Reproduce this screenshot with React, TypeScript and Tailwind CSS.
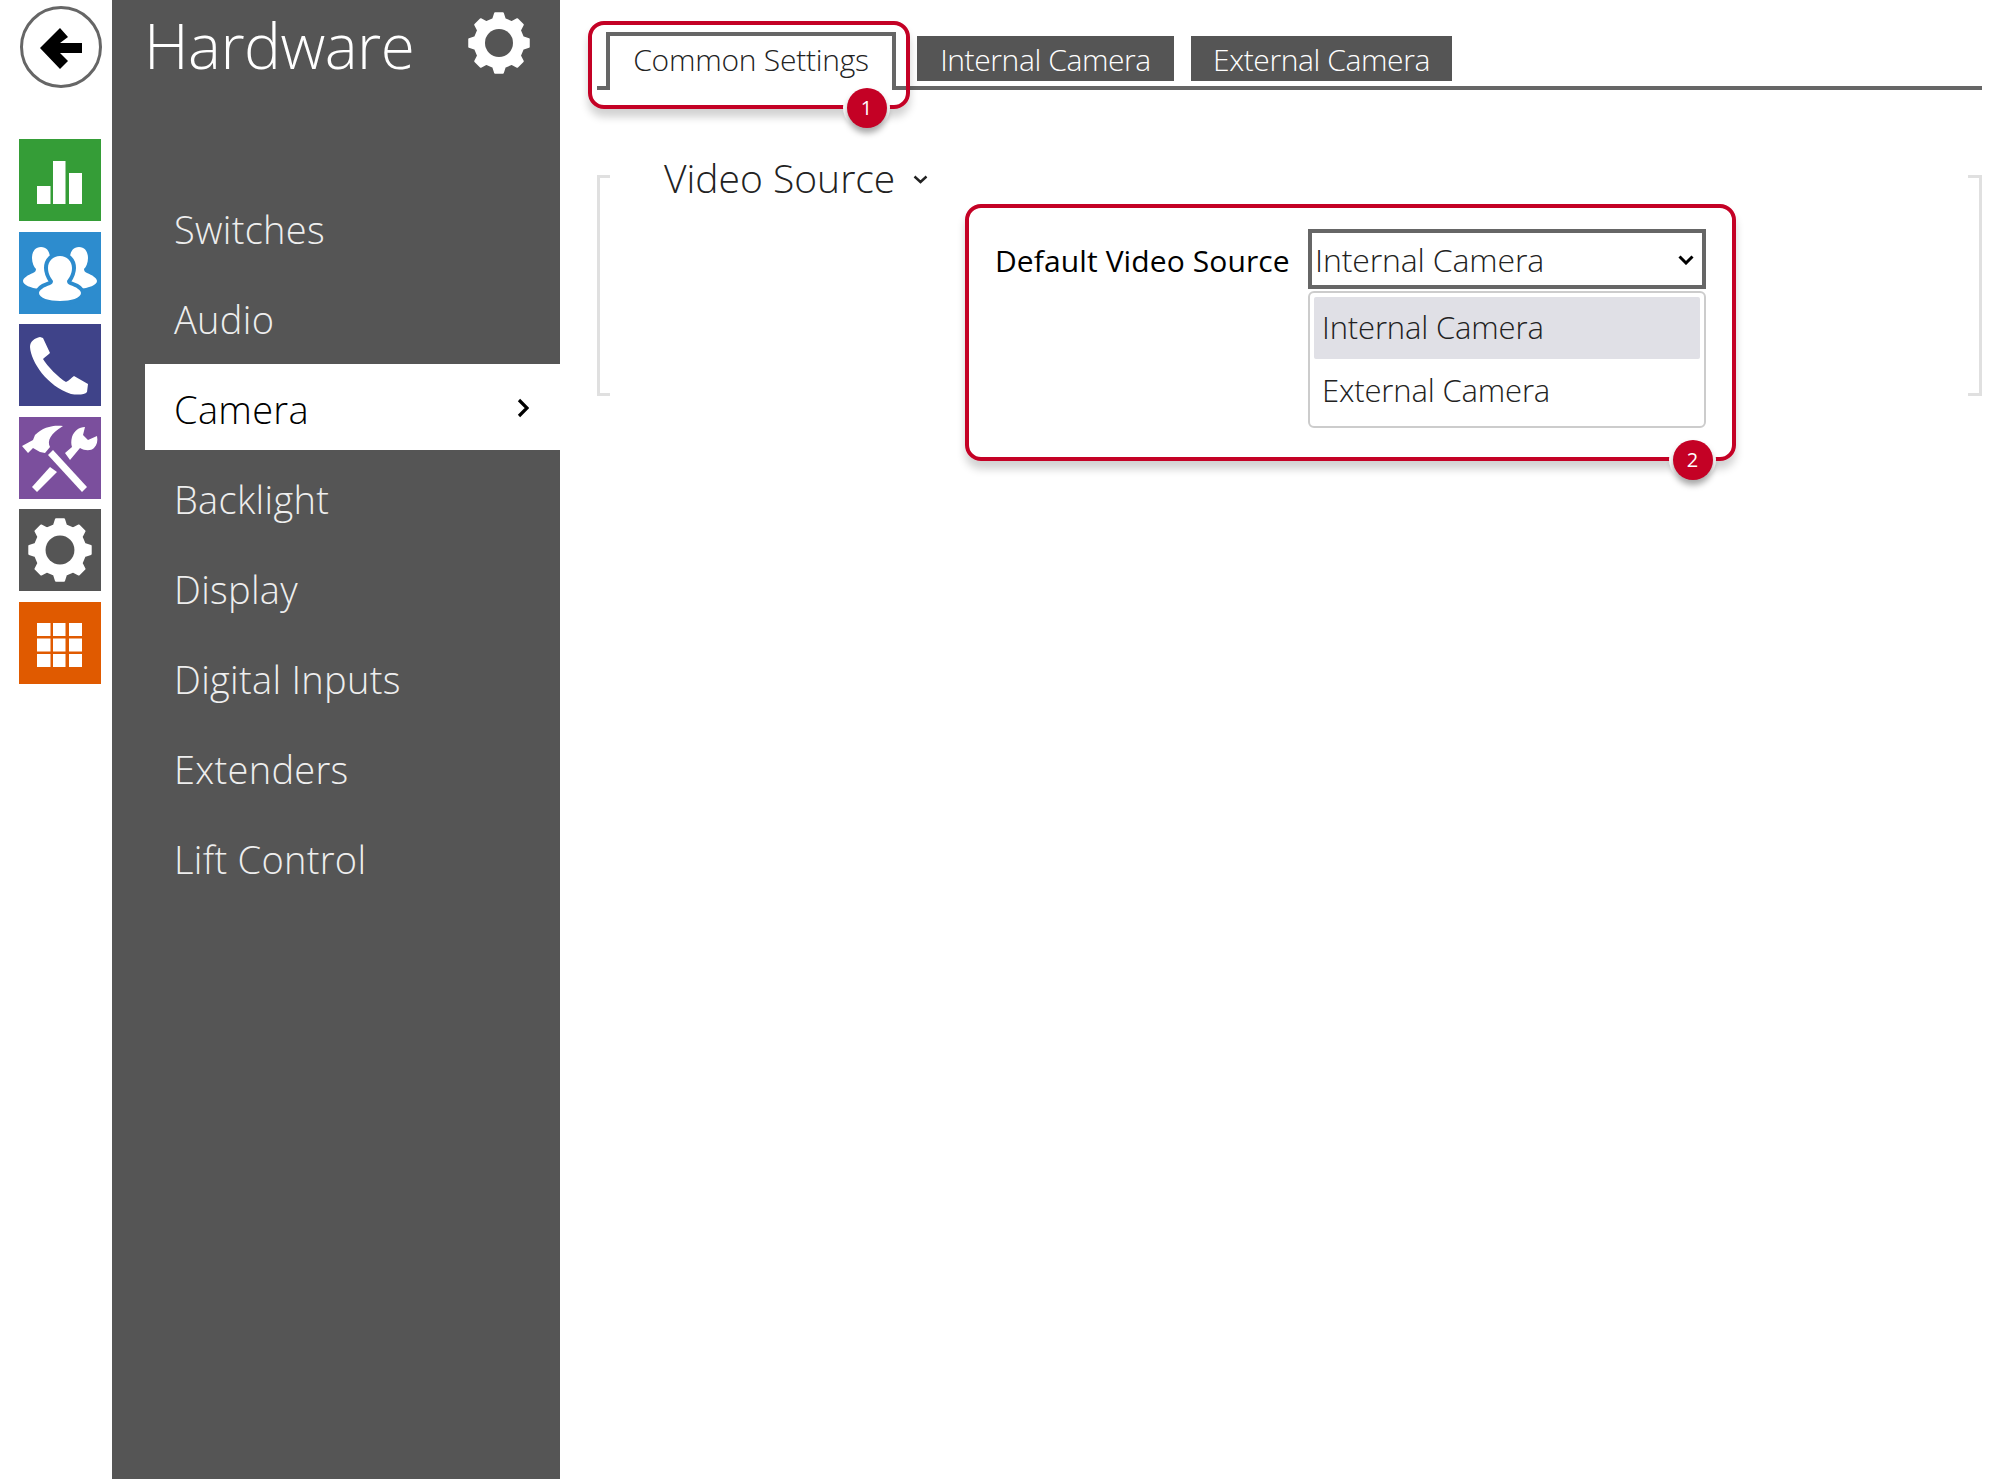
import React from "react";

const menuItems = ["Switches", "Audio", "Camera", "Backlight", "Display", "Digital Inputs", "Extenders", "Lift Control"];

// Builds the eight toothed outline used by both gear icons
const gearOutline = () => {
  const cx = 41;
  const cy = 41;
  const points: string[] = [];
  for (let i = 0; i < 8; i++) {
    const a = (i * Math.PI) / 4 - Math.PI / 2;
    const spots: [number, number][] = [
      [-0.24, 24.5],
      [-0.13, 30],
      [0.13, 30],
      [0.24, 24.5],
    ];
    spots.forEach(([da, r]) => {
      points.push(`${(cx + r * Math.cos(a + da)).toFixed(2)},${(cy + r * Math.sin(a + da)).toFixed(2)}`);
    });
  }
  return "M" + points.join("L") + "Z";
};

function Gear({ className }: { className: string }) {
  return (
    <svg viewBox="9 9 64 64" className={className}>
      <path d={gearOutline()} fill="#fff" stroke="#fff" strokeWidth="2" strokeLinejoin="round" />
      <circle cx="41" cy="41" r="14" fill="#555" />
    </svg>
  );
}

function BarsIcon() {
  return (
    <svg viewBox="0 0 82 82" className="w-full h-full" fill="#fff">
      <rect x="18" y="47" width="13.5" height="18" />
      <rect x="34" y="22" width="12.5" height="43" />
      <rect x="50" y="34" width="13" height="31" />
    </svg>
  );
}

function PeopleIcon() {
  const centerPerson = "M41 24C34 24 29 29 29 36C29 42 32 46 34 49C34 51 33 52 31 53C25 55 20 58 20 61C20 66 30 69 41 69C52 69 62 66 62 61C62 58 57 55 51 53C49 52 48 51 48 49C50 46 53 42 53 36C53 29 48 24 41 24Z";
  return (
    <svg viewBox="0 0 82 82" className="w-full h-full" fill="#fff">
      <path d="M22 15C16 15 13 20 13 26C13 31 15 35 17 37C17 39 16 40 14 41C9 43 4 46 4 49C4 53 12 56 20 57L60 57C70 56 78 53 78 49C78 46 73 43 68 41C66 40 65 39 65 37C67 35 69 31 69 26C69 20 66 15 60 15C54 15 51 20 51 26L31 26C31 20 28 15 22 15Z" />
      <path d={centerPerson} fill="#2d8cce" stroke="#2d8cce" strokeWidth="8" strokeLinejoin="round" />
      <path d={centerPerson} />
    </svg>
  );
}

function PhoneIcon() {
  return (
    <svg viewBox="0 0 82 82" className="w-full h-full" fill="#fff">
      <path d="M21 13C16 14 11 17 11 23C12 38 28 62 52 70C58 71 66 71 68 68L69 60L55 52C53 53 50 57 47 58C40 54 28 42 24 35C26 33 29 31 31 29L24 14Z" />
    </svg>
  );
}

function ToolsIcon() {
  return (
    <svg viewBox="0 0 82 82" className="w-full h-full" fill="#fff">
      <path d="M3 29L9 36L14 31L21 35L26 36L31 30C28 24 31 17 44 9C34 8 24 10 16 18L14 23Z" />
      <path d="M34 33L68 70L63 75L29 38Z" />
      <path d="M13 70L31 50L38 55L18 75Z" />
      <path d="M46 36L51 43L61 31C66 34 72 34 75 31C78 28 79 24 78 19L69 23L64 18L66 10C60 10 55 14 53 20C52 24 52 27 53 30Z" />
    </svg>
  );
}

function GridIcon() {
  return (
    <svg viewBox="0 0 82 82" className="w-full h-full" fill="#fff">
      <rect x="18" y="21" width="13.5" height="13" />
      <rect x="34" y="21" width="12.5" height="13" />
      <rect x="50" y="21" width="13" height="13" />
      <rect x="18" y="36.5" width="13.5" height="13" />
      <rect x="34" y="36.5" width="12.5" height="13" />
      <rect x="50" y="36.5" width="13" height="13" />
      <rect x="18" y="52" width="13.5" height="13" />
      <rect x="34" y="52" width="12.5" height="13" />
      <rect x="50" y="52" width="13" height="13" />
    </svg>
  );
}

function Rail() {
  return (
    <div className="w-[112px] shrink-0 pl-[19px] pt-[6px]">
      <div className="ml-[1px] w-[82px] h-[82px] rounded-full border-[3.5px] border-[#666] flex items-center justify-center">
        <svg viewBox="0 0 82 82" className="w-[82px] h-[82px] shrink-0">
          <path d="M20 42L40 22L48 31L40 37H62V47H40L48 55L40 63Z" fill="#000" />
        </svg>
      </div>
      <div className="mt-[51px] flex flex-col gap-[10.5px]">
        <div className="w-[82px] h-[82px] bg-[#359d37]"><BarsIcon /></div>
        <div className="w-[82px] h-[82px] bg-[#2d8cce]"><PeopleIcon /></div>
        <div className="w-[82px] h-[82px] bg-[#3f4389]"><PhoneIcon /></div>
        <div className="w-[82px] h-[82px] bg-[#7b4f9d]"><ToolsIcon /></div>
        <div className="w-[82px] h-[82px] bg-[#555] flex items-center justify-center"><Gear className="w-[66px] h-[66px]" /></div>
        <div className="w-[82px] h-[82px] bg-[#e05a00]"><GridIcon /></div>
      </div>
    </div>
  );
}

function Sidebar() {
  return (
    <div className="w-[448px] h-[1479px] shrink-0 bg-[#555] text-white">
      <div className="h-[88px] pl-[32px] pr-[29px] flex items-center justify-between">
        <span className="text-[62px] font-light leading-none tracking-[-0.5px] mt-[2px]">Hardware</span>
        <Gear className="w-[64px] h-[64px] -mt-[3px]" />
      </div>
      <nav className="mt-[96px] ml-[33px]">
        {menuItems.map((item) =>
          item === "Camera" ? (
            <div key={item} className="h-[86px] mb-[4px] pt-[4px] pl-[29px] pr-[31px] bg-white text-black flex items-center justify-between">
              <span className="text-[38px] font-light tracking-[0.3px]">{item}</span>
              <svg viewBox="0 0 12 20" className="w-[12px] h-[20px] -mt-[3px]" fill="none" stroke="#000" strokeWidth="3.2">
                <path d="M2 2L10 10L2 18" />
              </svg>
            </div>
          ) : (
            <div key={item} className="h-[90px] pl-[29px] flex items-center">
              <span className="text-[38px] font-light tracking-[0.3px] text-[#eee]">{item}</span>
            </div>
          )
        )}
      </nav>
    </div>
  );
}

function Tabs() {
  return (
    <div className="ml-[37px] mr-[18px] h-[90px] pl-[9px] border-b-4 border-[#666] flex items-start">
      <div className="relative w-[290px] h-[58px] mt-[32px] bg-white border-x-4 border-t-4 border-[#666] text-[30px] font-light tracking-[-0.25px] flex justify-center text-[#222]">
        <span className="mt-[4px] leading-[40px]">Common Settings</span>
      </div>
      <div className="ml-[21px] mt-[36px] w-[257px] h-[45px] pt-[2px] bg-[#555] text-white text-[30px] font-light tracking-[-0.4px] flex items-center justify-center">Internal Camera</div>
      <div className="ml-[17px] mt-[36px] w-[261px] h-[45px] pt-[2px] bg-[#555] text-white text-[30px] font-light tracking-[-0.4px] flex items-center justify-center">External Camera</div>
    </div>
  );
}

function VideoSource() {
  return (
    <div className="mt-[85px] ml-[37px] mr-[18px] h-[221px] flex">
      <div className="w-[13px] h-full shrink-0 border-l-[3px] border-y-[3px] border-[#e0e0e0]" />
      <div className="flex-1">
        <div className="-mt-[24px] h-[54px] pl-[54px] flex items-center gap-[18px]">
          <span className="text-[39px] font-light text-[#222]">Video Source</span>
          <svg viewBox="0 0 15 9" className="w-[15px] h-[9px] mt-[2px]" fill="none" stroke="#222" strokeWidth="2.4">
            <path d="M1.5 1.5L7.5 7L13.5 1.5" />
          </svg>
        </div>
        <div className="mt-[24px] h-[60px] pl-[385px] flex items-center">
          <span className="w-[313px] shrink-0 pt-[2px] text-[30px] font-medium tracking-[0.1px] text-black">Default Video Source</span>
          <div className="relative w-[398px] h-[60px] shrink-0 border-4 border-[#666] pl-[3px] pr-[8px] flex items-center justify-between">
            <span className="pt-[2px] text-[32px] font-light tracking-[-0.14px] text-[#222]">Internal Camera</span>
            <svg viewBox="0 0 16 10" className="w-[16px] h-[10px] mt-[1px]" fill="none" stroke="#000" strokeWidth="3">
              <path d="M1.5 1.5L8 8L14.5 1.5" />
            </svg>
            <div className="absolute -left-[4px] top-[58px] w-[398px] h-[137px] bg-white border-2 border-[#ccc] rounded-[6px] p-[4px]">
              <div className="h-[62px] bg-[#e0e0e6] rounded-[2px] pl-[8px] pb-[2px] flex items-center text-[31px] font-light tracking-[-0.15px] text-[#222]">Internal Camera</div>
              <div className="h-[64px] pl-[8px] pb-[2px] flex items-center text-[31px] font-light tracking-[-0.15px] text-[#222]">External Camera</div>
            </div>
          </div>
        </div>
      </div>
      <div className="w-[14px] h-full shrink-0 border-r-[3px] border-y-[3px] border-[#e0e0e0]" />
    </div>
  );
}

export default function App() {
  return (
    <div className="relative w-[2000px] h-[1480px] bg-white overflow-hidden flex font-['Open_Sans',sans-serif]">
      <Rail />
      <Sidebar />
      <main className="flex-1">
        <Tabs />
        <VideoSource />
      </main>

      {/* numbered callouts laid over the page */}
      <div className="absolute left-[588px] top-[21px] w-[322px] h-[88px] rounded-[16px] border-4 border-[#c40125] shadow-[0_8px_8px_rgba(0,0,0,0.18)] pointer-events-none" />
      <div className="absolute left-[965px] top-[204px] w-[771px] h-[257px] rounded-[16px] border-4 border-[#c40125] shadow-[0_8px_8px_rgba(0,0,0,0.18)] pointer-events-none" />
      <div className="absolute left-[843px] top-[84px] w-[47px] h-[47px] rounded-full bg-white flex items-center justify-center">
        <div className="w-[40px] h-[40px] rounded-full bg-[#c40125] text-white text-[20px] font-medium flex items-center justify-center shadow-[0_5px_6px_rgba(0,0,0,0.35)]">1</div>
      </div>
      <div className="absolute left-[1669px] top-[436px] w-[47px] h-[47px] rounded-full bg-white flex items-center justify-center">
        <div className="w-[40px] h-[40px] rounded-full bg-[#c40125] text-white text-[20px] font-medium flex items-center justify-center shadow-[0_5px_6px_rgba(0,0,0,0.35)]">2</div>
      </div>
    </div>
  );
}
